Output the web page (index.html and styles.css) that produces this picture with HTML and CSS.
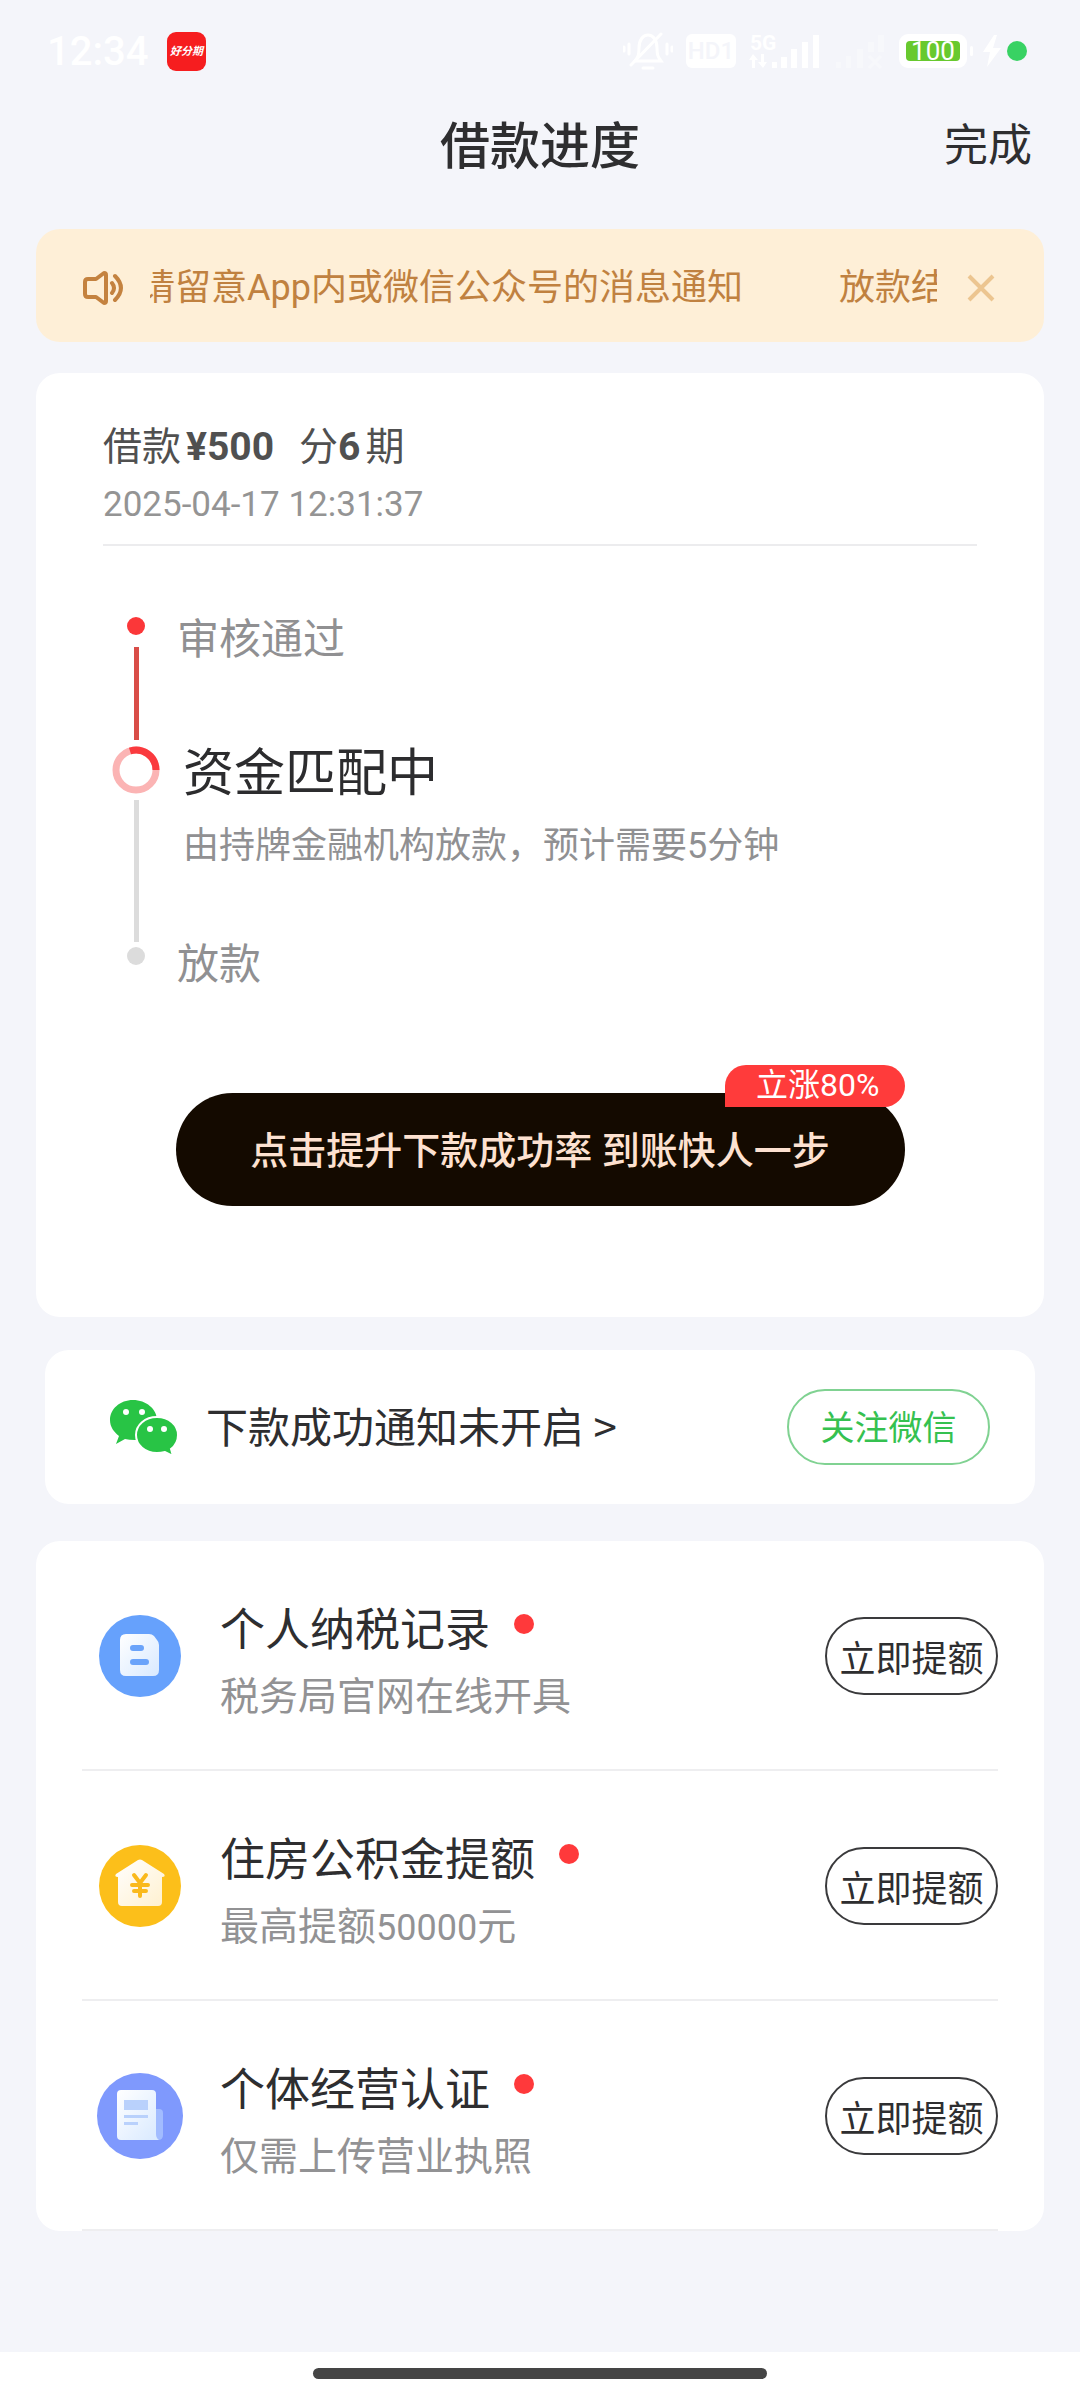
FILE: index.html
```html
<!DOCTYPE html>
<html lang="zh-CN">
<head>
<meta charset="utf-8">
<meta name="viewport" content="width=device-width, initial-scale=1">
<title>借款进度</title>
<link rel="stylesheet" href="styles.css">
</head>
<body>
<div class="page">
  <div class="status">
    <span class="clock">12:34</span>
    <span class="app-badge">好分期</span>
    <div class="status-icons">
      <svg class="bell" width="50" height="40" viewBox="0 0 50 40" fill="none" stroke="#fff" stroke-width="3" stroke-linecap="round">
        <path d="M12 30h26c-3-4-4-6-4-13 0-8-4-13-9-13s-9 5-9 13c0 7-1 9-4 13z"/><path d="M20 37h10M38 3 8 34M6 13v10M1 16v4M44 13v10M49 16v4"/>
      </svg>
      <span class="hd">HD1</span>
      <svg class="signal" width="72" height="38" viewBox="0 0 72 38" fill="#fff">
        <text x="1" y="18" font-size="21" font-weight="700">5G</text>
        <path d="M4 22l5 6H6v8H3v-8H0zM14 36l-5-6h3v-8h3v8h3zM23 30h5v6h-5zM32 25h6v11h-6zM42 17h6v19h-6zM53 10h6v26h-6zM64 3h6v33h-6z"/>
      </svg>
      <svg class="no-signal" width="52" height="38" viewBox="0 0 52 38" fill="#fff">
        <path d="M2 30h5v6H2zM12 24h5v12h-5zM23 17h6v19h-6zM34 10h6v10h-6zM44 3h6v17h-6z"/><path d="M35 24l12 12M47 24 35 36" stroke="#fff" stroke-width="3"/>
      </svg>
      <span class="battery"><span class="level">100</span></span>
      <svg class="bolt" width="20" height="32" viewBox="0 0 20 32" fill="#fff"><path d="M12 0 1 17h7L5 32 19 13h-8l4-13z"/></svg>
      <span class="active-dot"></span>
    </div>
  </div>

  <header class="titlebar">
    <h1>借款进度</h1>
    <button class="done" type="button">完成</button>
  </header>

  <main class="content">
    <section class="notice">
      <svg class="speaker" width="42" height="36" viewBox="0 0 42 36" fill="none" stroke="#c4823f" stroke-width="4" stroke-linejoin="round" stroke-linecap="round">
        <path d="M8 9h6l8-6q2 0 2 2v26q0 2-2 2l-8-6H6q-3 0-3-3V12q0-3 3-3z"/><path d="M30 13q4 5 0 10M33 6q12 12 0 24"/>
      </svg>
      <div class="marquee"><div class="track"><span>请留意App内或微信公众号的消息通知</span><span>放款结果</span></div></div>
      <button class="close" type="button" aria-label="关闭">
        <svg width="28" height="28" viewBox="0 0 28 28" fill="none" stroke="#ecc590" stroke-width="4"><path d="M2 2l24 24M26 2 2 26"/></svg>
      </button>
    </section>

    <section class="card progress">
      <div class="loan">
        <h2>借款<b class="amount">¥500</b>分<b class="terms">6</b>期</h2>
        <time datetime="2025-04-17T12:31:37">2025-04-17 12:31:37</time>
      </div>
      <ol class="steps">
        <li class="step passed">
          <span class="rail"><i class="dot"></i><i class="line"></i></span>
          <div class="step-text"><p>审核通过</p></div>
        </li>
        <li class="step current">
          <span class="rail">
            <svg class="ring" width="48" height="48" viewBox="0 0 48 48" fill="none" stroke-width="7">
              <circle cx="24" cy="24" r="20" stroke="#fbb4b4"/><path d="M18 5A20 20 0 0 1 44 24" stroke="#fa3a3e"/>
            </svg>
            <i class="line"></i>
          </span>
          <div class="step-text"><h3>资金匹配中</h3><p class="hint">由持牌金融机构放款，预计需要5分钟</p></div>
        </li>
        <li class="step pending">
          <span class="rail"><i class="dot"></i></span>
          <div class="step-text"><p>放款</p></div>
        </li>
      </ol>
      <button class="boost" type="button">点击提升下款成功率 到账快人一步<span class="boost-tag">立涨80%</span></button>
    </section>

    <section class="card wechat">
      <svg class="wechat-logo" width="70" height="56" viewBox="0 0 70 56">
        <path fill="#28c445" d="M24 1C11 1 1 10 1 21c0 7 4 12 9 16l-3 8 9-5q4 1 10 1C38 41 48 32 48 21S37 1 24 1z"/>
        <path fill="#28c445" stroke="#fff" stroke-width="2" d="M48 18c-12 0-21 8-21 18s9 18 21 18q4 0 8-1l8 4-2-7c4-3 7-8 7-14 0-10-9-18-21-18z"/>
        <g fill="#fff"><circle cx="17" cy="13" r="3"/><circle cx="33" cy="13" r="3"/><circle cx="41" cy="30" r="3"/><circle cx="55" cy="30" r="3"/></g>
      </svg>
      <a class="wechat-link" href="#wechat">下款成功通知未开启 &gt;</a>
      <button class="follow" type="button">关注微信</button>
    </section>

    <ul class="card offers">
      <li class="offer">
        <svg class="offer-icon" width="88" height="88" viewBox="0 0 88 88">
          <defs><linearGradient id="sheet" x1="0" y1="0" x2="1" y2="1"><stop offset="0" stop-color="#fff"/><stop offset="1" stop-color="#d8e9ff"/></linearGradient></defs>
          <circle cx="44" cy="44" r="41" fill="#66a1fc"/>
          <path fill="url(#sheet)" d="M30 22h23q3 0 5 2l3 4q2 2 2 5v25q0 6-6 6H30q-6 0-6-6V28q0-6 6-6z"/>
          <path stroke="#6aa3fa" stroke-width="6" stroke-linecap="round" d="M37 36h8M37 50h13"/>
        </svg>
        <div class="offer-text"><h3>个人纳税记录<i class="new-dot"></i></h3><p>税务局官网在线开具</p></div>
        <button class="raise" type="button">立即提额</button>
      </li>
      <li class="offer">
        <svg class="offer-icon" width="88" height="88" viewBox="0 0 88 88">
          <defs><linearGradient id="house" x1="0" y1="0" x2="1" y2="1"><stop offset="0" stop-color="#fff"/><stop offset="1" stop-color="#fff0cf"/></linearGradient></defs>
          <circle cx="44" cy="44" r="41" fill="#fcbf1a"/>
          <path fill="url(#house)" d="M42 18q2-1 4 0l22 14q2 3-2 3v25q0 4-4 4H26q-4 0-4-4V35q-4 0-2-3z"/>
          <path fill="none" stroke="#fab91c" stroke-width="4" stroke-linecap="round" d="m38 33 6 8 6-8M36 43h16M38 49h12M44 42v12"/>
        </svg>
        <div class="offer-text"><h3>住房公积金提额<i class="new-dot"></i></h3><p>最高提额<span class="digits">50000</span>元</p></div>
        <button class="raise" type="button">立即提额</button>
      </li>
      <li class="offer">
        <svg class="offer-icon" width="88" height="88" viewBox="0 0 88 88">
          <circle cx="44" cy="44" r="43" fill="#7f99fd"/>
          <path fill="#a2bcff" d="M58 37h5q4 0 4 4v22q0 5-5 5h-6z"/>
          <path fill="url(#sheet)" d="M25 18h31q4 0 4 4v40q0 4 3 6H25q-4 0-4-4V22q0-4 4-4z"/>
          <path fill="#b9d1fc" d="M28 28h24v10H28zM28 43h24v3H28zM28 50h14v3H28z"/>
        </svg>
        <div class="offer-text"><h3>个体经营认证<i class="new-dot"></i></h3><p>仅需上传营业执照</p></div>
        <button class="raise" type="button">立即提额</button>
      </li>
    </ul>
  </main>

  <footer class="home-strip"><span class="home-bar"></span></footer>
</div>
</body>
</html>
```
FILE: styles.css
```css
* { box-sizing: border-box; }

body, h1, h2, h3, p, ol, ul { margin: 0; padding: 0; }

body {
  background: #f4f5fa;
  color: #2e2e30;
  font-family: Roboto, "Noto Sans CJK SC", sans-serif;
}

h2, h3 { font-weight: 400; }
ol, ul { list-style: none; }

button {
  padding: 0;
  border: 0;
  background: none;
  color: inherit;
  font: inherit;
}

svg { display: block; flex: none; }

.page {
  display: flex;
  flex-direction: column;
  min-height: 100vh;
}

/* Status bar */
.status {
  display: flex;
  align-items: center;
  height: 102px;
  padding: 0 53px 0 47px;
  color: #fff;
}

.clock {
  width: 120px;
  font-size: 40px;
  font-weight: 500;
}

.app-badge {
  width: 39px;
  height: 39px;
  border-radius: 9px;
  background: #f61d1f;
  font-size: 11px;
  font-style: italic;
  font-weight: 700;
  line-height: 39px;
  text-align: center;
  white-space: nowrap;
}

.status-icons {
  display: flex;
  align-items: center;
  gap: 13px;
  margin-left: auto;
}

.hd {
  width: 50px;
  height: 34px;
  border-radius: 6px;
  background: #fff;
  color: #f4f5fa;
  font-size: 24px;
  font-weight: 500;
  line-height: 34px;
  text-align: center;
}

.no-signal { opacity: 0.35; }

.battery {
  position: relative;
  width: 68px;
  height: 34px;
  margin-right: 2px;
  padding: 7px;
  border-radius: 9px;
  background: #fff;
}

.battery::after {
  content: "";
  position: absolute;
  top: 12px;
  right: -6px;
  width: 3px;
  height: 10px;
  border-radius: 2px;
  background: #fff;
}

.level {
  display: block;
  height: 20px;
  border-radius: 4px;
  background: #68c92e;
  font-size: 26px;
  line-height: 21px;
  text-align: center;
}

.active-dot {
  width: 20px;
  height: 20px;
  margin-left: -8px;
  border-radius: 50%;
  background: #38d263;
}

/* Title bar */
.titlebar {
  display: grid;
  grid-template-columns: 1fr auto 1fr;
  align-items: center;
  height: 80px;
  padding: 0 48px;
}

.titlebar h1 {
  grid-column: 2;
  font-size: 50px;
  font-weight: 500;
}

.done {
  justify-self: end;
  font-size: 44px;
}

.content {
  display: flex;
  flex-direction: column;
  padding: 47px 36px 39px;
}

/* Scrolling notice */
.notice {
  display: flex;
  align-items: center;
  height: 113px;
  margin-bottom: 31px;
  padding: 4px 49px 0 46px;
  border-radius: 24px;
  background: #feefd7;
  color: #c08140;
}

.marquee {
  flex: 1;
  margin: 0 30px 0 26px;
  overflow: hidden;
}

.track {
  display: flex;
  gap: 96px;
  margin-left: -11px;
  font-size: 36px;
  line-height: 50px;
  white-space: nowrap;
}

.card {
  border-radius: 24px;
  background: #fff;
}

/* Loan progress */
.progress {
  margin-bottom: 33px;
  padding: 51px 67px 111px;
}

.loan {
  display: flex;
  flex-direction: column;
  gap: 15px;
  padding-bottom: 19px;
  border-bottom: 2px solid #ececee;
}

.loan h2 {
  color: #505050;
  font-size: 39px;
  line-height: 46px;
}

.loan time {
  color: #949494;
  font-size: 35px;
  line-height: 40px;
}

.amount { margin: 0 25px 0 5px; }
.terms { margin: 0 5px 0 0; }

.steps {
  padding: 71px 0 0 8px;
  color: #909092;
  font-size: 42px;
  line-height: 42px;
}

.step { display: flex; }

.rail {
  display: flex;
  flex-direction: column;
  align-items: center;
  width: 50px;
}

.dot {
  width: 18px;
  height: 18px;
  border-radius: 50%;
  background: #dcdcdc;
}

.line {
  flex: 1;
  width: 5px;
  background: #dcdcdc;
}

.step-text { padding: 2px 0 0 16px; }

.passed { min-height: 129px; }
.passed .dot { background: #fb3739; }
.passed .line { margin: 12px 0 6px; background: #d94d48; }

.current { min-height: 196px; }
.current .line { margin-top: 6px; }
.current .step-text { padding-left: 22px; }

.current h3 {
  margin-bottom: 24px;
  color: #2c2c2e;
  font-size: 51px;
  line-height: 52px;
}

.hint {
  font-size: 36px;
  line-height: 44px;
}

.pending .rail { padding-top: 5px; }

.boost {
  position: relative;
  display: block;
  width: calc(100% - 145px);
  height: 113px;
  margin: 107px auto 0;
  padding-bottom: 4px;
  border-radius: 57px;
  background: #140a00;
  color: #fde1d0;
  font-size: 38px;
  font-weight: 500;
}

.boost-tag {
  position: absolute;
  top: -28px;
  right: 0;
  height: 42px;
  padding: 0 25px 0 31px;
  border-radius: 21px 21px 21px 0;
  background: #ff3b3b;
  color: #fff;
  font-size: 32px;
  font-weight: 400;
  line-height: 40px;
}

/* WeChat notice */
.wechat {
  display: flex;
  align-items: center;
  height: 154px;
  margin: 0 9px 37px;
  padding: 0 45px 0 64px;
}

.wechat-link {
  margin-left: 27px;
  padding-bottom: 4px;
  color: inherit;
  font-family: "Noto Sans CJK SC", sans-serif;
  font-size: 42px;
  line-height: 60px;
  text-decoration: none;
}

.follow {
  width: 203px;
  height: 76px;
  margin-left: auto;
  padding-bottom: 4px;
  border: 2px solid #80d292;
  border-radius: 38px;
  color: #35c150;
  font-size: 34px;
}

/* Credit limit offers */
.offers { padding: 0 46px; }

.offer {
  display: flex;
  align-items: center;
  min-height: 230px;
  padding: 2px 0 0 14px;
  border-bottom: 2px solid #eeeef0;
}

.offer-text {
  margin-left: 36px;
  padding-top: 16px;
}

.offer-text h3 {
  display: flex;
  align-items: center;
  gap: 24px;
  font-size: 45px;
  line-height: 66px;
}

.offer-text p {
  color: #929294;
  font-size: 39px;
  line-height: 66px;
}

.digits { font-size: 36px; }

.new-dot {
  width: 20px;
  height: 20px;
  margin-bottom: 14px;
  border-radius: 50%;
  background: #ff393b;
}

.raise {
  width: 173px;
  height: 78px;
  margin-left: auto;
  border: 2px solid #3a3a3c;
  border-radius: 39px;
  font-size: 36px;
}

/* System navigation */
.home-strip {
  display: flex;
  justify-content: center;
  height: 48px;
  margin-top: auto;
  padding-top: 16px;
  background: #fff;
}

.home-bar {
  width: 42%;
  height: 11px;
  border-radius: 6px;
  background: #454545;
}
```
